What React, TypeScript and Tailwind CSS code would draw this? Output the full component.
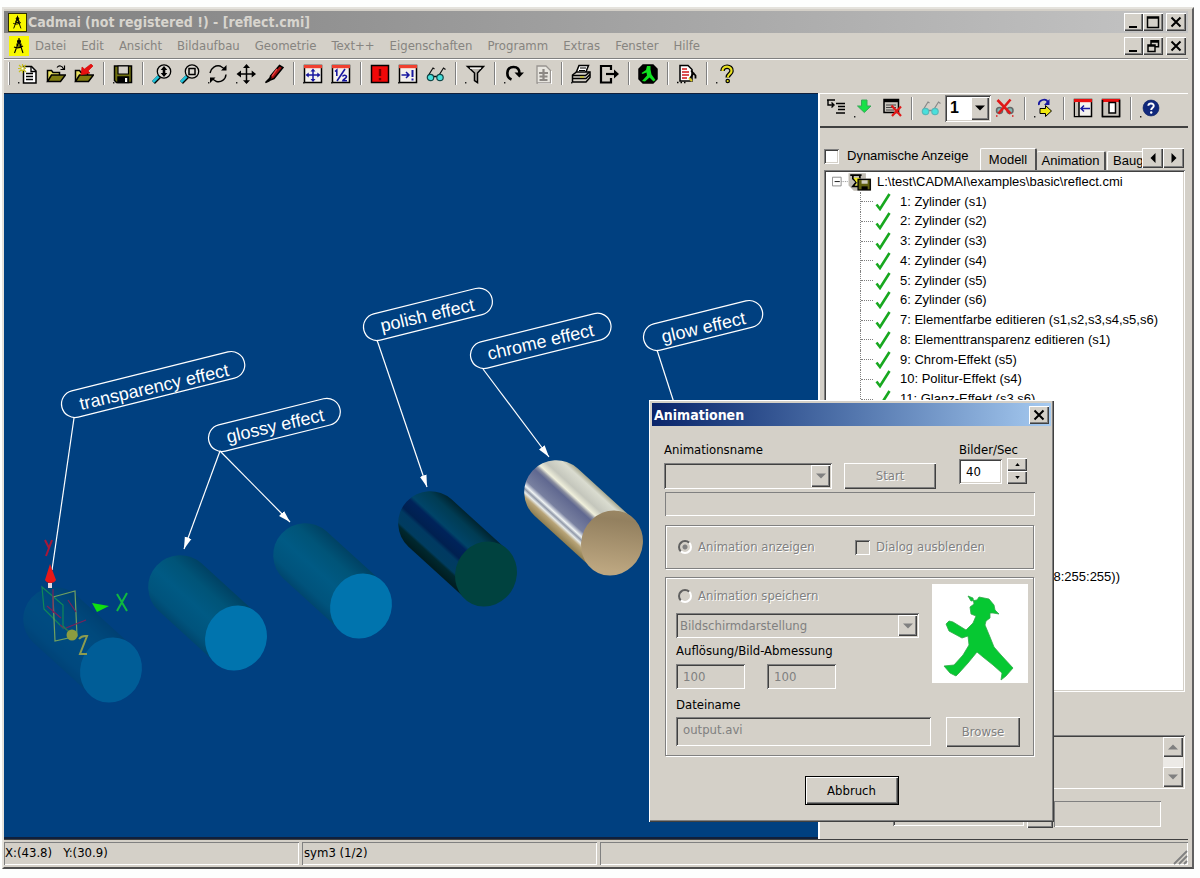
import React from "react";

const RAISED =
  "bg-[#d4d0c8] shadow-[inset_1px_1px_0_#fff,inset_-1px_-1px_0_#404040,inset_-2px_-2px_0_#808080]";
const SUNKEN =
  "shadow-[inset_1px_1px_0_#808080,inset_-1px_-1px_0_#fff,inset_2px_2px_0_#404040,inset_-2px_-2px_0_#d4d0c8]";
const THIN_SUNKEN = "shadow-[inset_1px_1px_0_#808080,inset_-1px_-1px_0_#fff]";
const ETCHED = "border border-[#808080] shadow-[1px_1px_0_#fff,inset_1px_1px_0_#fff]";
const DISABLED = "text-[#808080] [text-shadow:1px_1px_0_#fff]";

/* ---------- icons ---------- */

function Icon({ children }: { children: React.ReactNode }) {
  return (
    <svg viewBox="0 0 20 20" className="size-5" fill="none" stroke="#000" strokeWidth="1.5" aria-hidden="true">
      {children}
    </svg>
  );
}

const Dot = () => <path d="M0 18h1.4v1.4H0z" fill="#222" stroke="none" />;

const NewIcon = () => (
  <Icon>
    <path d="M5.5 2.5h8l4.5 4.5v12H5.5z" fill="#fff" />
    <path d="M13 2.5v5h5M8 9.5h7M8 12.5h7M8 15.5h7" strokeWidth="1.3" />
    <path d="M1 1l7 7M8 1L1 8M4.5 0v9M0 4.5h8" stroke="#c8c020" strokeWidth="1.2" />
    <path d="M3.5 3.5h2v2h-2z" fill="#fff" stroke="none" />
    <Dot />
  </Icon>
);

const Folder = () => (
  <>
    <path d="M1.500 17V6.500h4l1.500 2h6.500V11" fill="#e8e060" />
    <path d="M1.500 17.500L5.500 11h14l-5 6.500z" fill="#807c10" />
  </>
);

const OpenIcon = () => (
  <Icon>
    <Folder />
    <path d="M11 3.500c2-2.500 5-2 6.500 1.500M18.500 1.500v4h-4" strokeWidth="1.200" />
  </Icon>
);

const OpenRedIcon = () => (
  <Icon>
    <Folder />
    <path d="M17 0l2 2-5 5 2 2-9 2 1-8 2.500 2z" fill="#e81010" stroke="#c00" strokeWidth=".6" />
  </Icon>
);

const SaveIcon = () => (
  <Icon>
    <path d="M1.500 2h17v16.500h-15l-2-2z" fill="#707010" />
    <path d="M5 2h10.500v8H5z" fill="#d4d0c8" strokeWidth="1.200" />
    <path d="M5 13h10.500v5.500H5z" fill="#000" />
    <path d="M12 14h2.200v4H12z" fill="#fff" stroke="none" />
    <Dot />
  </Icon>
);

const Lens = () => (
  <>
    <path d="M1.500 18.500l6-6" stroke="#000" strokeWidth="4" />
    <path d="M1 18l6-6" stroke="#20c0d8" strokeWidth="2.800" />
    <circle cx="12" cy="7.500" r="6.700" fill="#dcd9d2" strokeWidth="1.300" />
  </>
);

const ZoomIcon = () => (
  <Icon>
    <Lens />
    <path d="M12 2l3.300 4h-2v3h2L12 13 8.700 9h2V6h-2z" fill="#000" stroke="none" />
  </Icon>
);

const ZoomBoxIcon = () => (
  <Icon>
    <Lens />
    <path d="M9 4.500h6v6H9z" />
  </Icon>
);

const RotateIcon = () => (
  <Icon>
    <path d="M2 9C3 3.500 8 1 12 2l4 2.500M18 10.500c-.5 5.500-5 8-9.500 7l-4-2.500" strokeWidth="1.400" />
    <path d="M18.500 1v5.500H13zM2 19v-5.500h5.500z" fill="#000" stroke="none" />
    <Dot />
  </Icon>
);

const MoveIcon = () => (
  <Icon>
    <path d="M10.500 2v17M2 10h17" />
    <path d="M10.500 0l3.500 4H7zM10.500 20l3.500-3.800H7zM.5 10L5 6.500v7zM20 10l-4.300-3.500v7z" fill="#000" stroke="none" />
    <Dot />
  </Icon>
);

const PenIcon = () => (
  <Icon>
    <path d="M15.500 1.500l3.500 2-9 11-4 1.500.5-4z" fill="#a01010" />
    <path d="M13 5l-5 7" stroke="#f04040" strokeWidth="1.300" />
    <path d="M7 13l-5.500 5.500L5 17z" fill="#000" />
  </Icon>
);

const FrameBase = ({ red = false }: { red?: boolean }) => (
  <>
    <path d="M1.500 1.500h17v17h-17z" fill="#f4f2ee" />
    <path d="M1 1h18v3.200H1z" fill={red ? "#e81010" : "#f04030"} stroke="none" />
  </>
);

const FitIcon = () => (
  <Icon>
    <FrameBase />
    <path d="M10 6v11M4 11h12" stroke="#1818a0" />
    <path d="M10 4.500l2.500 3h-5zM10 18l2.500-3h-5zM2.500 11l3.200-2.600v5.200zM17.500 11l-3.200-2.600v5.200z" fill="#1818a0" stroke="none" />
    <Dot />
  </Icon>
);

const HalfIcon = () => (
  <Icon>
    <FrameBase />
    <path d="M4 7.500l1.800-1.500v6M14 5L6 17M11.500 12.500c1-2 4-1.500 4 .3 0 1.500-3.500 2.700-3.700 4H16" stroke="#1818a0" strokeWidth="1.600" />
    <Dot />
  </Icon>
);

const AlertIcon = () => (
  <Icon>
    <path d="M1.500 1.500h17v17h-17z" fill="#f00808" />
    <path d="M10 5v7M10 14v2.200" stroke="#700" strokeWidth="2.400" />
  </Icon>
);

const StepIcon = () => (
  <Icon>
    <FrameBase />
    <path d="M3.500 11h7M8 8l3 3-3 3" stroke="#1818a0" />
    <path d="M14.500 6v7M14.500 14.500v2" stroke="#1818a0" strokeWidth="2" />
    <Dot />
  </Icon>
);

const GlassesIcon = ({ soft = false }: { soft?: boolean }) => (
  <Icon>
    <path d="M2 12l5-8 1.500 1M12.500 12l5-8 2 1.500" stroke={soft ? "#888" : "#111"} strokeWidth="1.200" />
    <path d="M7.500 12.500h4" stroke={soft ? "#888" : "#111"} />
    <circle cx="4.500" cy="13.500" r="3.200" fill="#48e0dc" stroke={soft ? "#58b8b8" : "#104848"} strokeWidth="1.200" />
    <circle cx="14" cy="13.500" r="3.200" fill="#48e0dc" stroke={soft ? "#58b8b8" : "#104848"} strokeWidth="1.200" />
  </Icon>
);

const FilterIcon = () => (
  <Icon>
    <path d="M2.500 2.500h16L12.500 9v9.500l-3-2V9z" fill="#b8b4ac" />
    <path d="M5 4.300h11" stroke="#fff" strokeWidth="1" />
    <Dot />
  </Icon>
);

const RedoIcon = () => (
  <Icon>
    <path d="M7.500 15.500C1.500 13 2 3 9.500 3c4.500 0 6 3 6 6.500" strokeWidth="2.600" />
    <path d="M10.500 8.500h9.500l-4.700 5z" fill="#000" stroke="none" />
    <Dot />
  </Icon>
);

const DocDisabledIcon = () => (
  <Icon>
    <path d="M5 2h9l4.500 4.500V19H5z" fill="#e8e6e0" stroke="#989490" strokeWidth="1.300" />
    <path d="M11.500 5v12M7 9h9M7.500 12.500h8M7.500 16h8" stroke="#8c8884" strokeWidth="2.200" />
    <path d="M19.500 7v13H6" stroke="#fff" strokeWidth="1" />
  </Icon>
);

const PrintIcon = () => (
  <Icon>
    <path d="M5 9l3-7.500h9.500L14.500 9z" fill="#fff" />
    <path d="M9 4h6M8 6.500h6" strokeWidth="1" />
    <path d="M1.500 11l4-3h13.500v5.500l-4 4.500H1.500z" fill="#d4d0c8" />
    <path d="M1.500 11.500h13l4-3.500M2 14.500h13l4-4" />
    <path d="M9 13h4" stroke="#c8c020" strokeWidth="1.400" />
    <Dot />
  </Icon>
);

const ExitIcon = () => (
  <Icon>
    <path d="M12 6V2H2v16.500h10V14" strokeWidth="2.200" />
    <path d="M7 10h9" strokeWidth="2.200" />
    <path d="M15 5.500L20 10l-5 4.500z" fill="#000" stroke="none" />
  </Icon>
);

const WalkerIcon = () => (
  <Icon>
    <path d="M5 1h10l4 4v10l-4 4H5l-4-4V5z" fill="#000" />
    <path d="M9 2h3.500v3.500l1 5 4 5.500-2 1.500-4-4-4.500 4-3-.5 5-5.500-.5-3-4 1.500L3.500 9 8 6z" fill="#10e020" stroke="none" />
  </Icon>
);

const NotesIcon = () => (
  <Icon>
    <path d="M3 1.500h8l4 4V17H3z" fill="#fff" />
    <path d="M5 5h5M5 8h7M5 11h7M5 14h5" stroke="#d01818" strokeWidth="1.500" />
    <path d="M14 6.500l4.500 5v3M13 14.500l4-6" strokeWidth="1.800" />
    <path d="M12 14l3 3" stroke="#d8c820" strokeWidth="2" />
    <path d="M0 18.500h10" strokeDasharray="1.500 2" />
  </Icon>
);

const HelpIcon = () => (
  <Icon>
    <path d="M6.500 7c0-6 9.500-5.500 9 0 0 3-3.800 3-3.800 6.500" strokeWidth="4.600" />
    <path d="M6.500 7c0-6 9.500-5.500 9 0 0 3-3.800 3-3.800 6.500" stroke="#e8e020" strokeWidth="2.200" />
    <circle cx="11.700" cy="17" r="1.700" fill="#e8e020" strokeWidth="1.200" />
    <Dot />
  </Icon>
);

const InsertIcon = () => (
  <Icon>
    <path d="M1 2h8M2 2v5h5M5.500 4.500L8 7 5.500 9.500M10 5.500h9M12 8.500h7M12 11.500h7M10 15h9" strokeWidth="1.400" />
  </Icon>
);

const DownIcon = () => (
  <Icon>
    <path d="M7.500 2h5.500v6h4l-6.700 6.500L3.500 8h4z" fill="#18e048" stroke="#38a858" strokeWidth="1" />
    <Dot />
  </Icon>
);

const ListDeleteIcon = () => (
  <Icon>
    <path d="M2 1.500h14.500v13H2z" fill="#c8c4bc" />
    <path d="M2 3h14.500" strokeWidth="2.400" />
    <path d="M4 7h10M4 9.500h10M4 12h8" stroke="#444" strokeWidth="1" />
    <path d="M9.500 7.500l9.500 10.500M19 8.500l-9 9.500" stroke="#e01818" strokeWidth="2.200" />
  </Icon>
);

const GlassesOffIcon = () => (
  <Icon>
    <circle cx="4.500" cy="12.500" r="3" fill="#80b8b4" stroke="#666" />
    <circle cx="15" cy="12.500" r="3" fill="#80b8b4" stroke="#666" />
    <path d="M2.500 2l13 13.500M15.500 1.500L3.500 15.500" stroke="#e01818" strokeWidth="2.600" />
    <path d="M1 18h1.500M17 18h1.500" stroke="#e01818" />
  </Icon>
);

const RefreshIcon = () => (
  <Icon>
    <path d="M5 7c-1-5 7-7.500 9-2.500" stroke="#1818a0" strokeWidth="1.800" />
    <path d="M15.500 1v6H10z" fill="#1818a0" stroke="none" />
    <path d="M6 10.500h5.500V7.500l6 5.500-6 5.500V15.500H6z" fill="#f0e810" strokeWidth="1" />
    <Dot />
  </Icon>
);

const DockIcon = () => (
  <Icon>
    <FrameBase red />
    <path d="M2 4.500h4V18H2z" fill="#c8c4bc" stroke="none" />
    <path d="M6 4v14" />
    <path d="M8 10.500h9M11 7.500l-3 3 3 3" stroke="#1818a0" />
  </Icon>
);

const WindowIcon = () => (
  <Icon>
    <FrameBase red />
    <path d="M2 4.500h16V18H2z" fill="#c8c4bc" stroke="none" />
    <path d="M8 4.500h6.500V15H8z" fill="#fff" />
    <path d="M1.500 2v16.500h17V2" />
  </Icon>
);

const InfoIcon = () => (
  <Icon>
    <circle cx="11" cy="10" r="8" fill="#10287c" stroke="#0c2060" strokeWidth=".6" />
    <path d="M8.300 7.800c.2-3.500 5.700-3 5.400.2-.1 1.700-2.500 1.800-2.500 4" stroke="#fff" strokeWidth="2" />
    <circle cx="11.200" cy="14.500" r="1.200" fill="#fff" stroke="none" />
    <Dot />
  </Icon>
);

const CheckMark = () => (
  <svg viewBox="0 0 16 18" className="h-[18px] w-4" fill="none" stroke="#18a820" strokeWidth="2.600" aria-hidden="true">
    <path d="M1.500 11.500L5 16 14.500 1" />
  </svg>
);

const AppLogo = () => (
  <svg viewBox="0 0 20 20" className="size-5" fill="none" stroke="#000" strokeWidth="1.100" aria-hidden="true">
    <path d="M0 0h20v20H0z" fill="#f8f800" stroke="none" />
    <path d="M10 2v3M10 5L5.500 17M10 5l4 12M5 11c3 1.500 6 1 9-1M8 8h4v2H8z" />
    <circle cx="10" cy="5.500" r="1.500" fill="#000" />
  </svg>
);

const Arrow = ({ dir, dim = false }: { dir: "up" | "down" | "left" | "right"; dim?: boolean }) => {
  const d = { up: "M0 6l4-4 4 4z", down: "M0 2l4 4 4-4z", left: "M6 0v8L2 4z", right: "M2 0v8l4-4z" }[dir];
  return (
    <svg viewBox="0 0 8 8" className="size-[10px]" aria-hidden="true">
      <path d={d} fill={dim ? "#808080" : "#000"} />
    </svg>
  );
};

const Glyph = ({ kind }: { kind: "min" | "max" | "restore" | "close" }) => (
  <svg viewBox="0 0 14 14" className="size-[14px]" fill="none" stroke="#000" strokeWidth="1.500" aria-hidden="true">
    {kind === "min" && <path d="M2 12h8" strokeWidth="2" />}
    {kind === "max" && <path d="M1.500 2h11v10.500h-11zM1.500 3h11" />}
    {kind === "restore" && <path d="M5 6V1.800h7.500v6H9M5 3h7M2 6h7v6.500H2zM2 7h7" />}
    {kind === "close" && <path d="M2.500 2.500l9 9M11.500 2.500l-9 9" strokeWidth="2" />}
  </svg>
);

/* ---------- small controls ---------- */

const ToolButton = ({ label, children }: { label: string; children: React.ReactNode }) => (
  <button type="button" aria-label={label} className="grid h-6 w-7 shrink-0 place-items-center">
    {children}
  </button>
);

const Divider = () => (
  <span className="flex w-[11px] shrink-0 justify-center">
    <span className="h-[23px] w-[2px] border-l border-[#808080] bg-white" />
  </span>
);

const WindowButtons = ({ middle }: { middle: "max" | "restore" }) => (
  <div className="flex">
    <button type="button" aria-label="Minimieren" className={`grid h-[18px] w-[19px] place-items-center ${RAISED}`}>
      <Glyph kind="min" />
    </button>
    <button type="button" aria-label="Maximieren" className={`mr-[3px] grid h-[18px] w-5 place-items-center ${RAISED}`}>
      <Glyph kind={middle} />
    </button>
    <button type="button" aria-label="Schließen" className={`grid h-[18px] w-5 place-items-center ${RAISED}`}>
      <Glyph kind="close" />
    </button>
  </div>
);

/* ---------- 3D view ---------- */

type Stop = [number, string];

function Cylinder({ id, x, y, face, stops, opacity = 1 }: { id: string; x: number; y: number; face: string; stops: Stop[]; opacity?: number }) {
  return (
    <g transform={`translate(${x} ${y})`} opacity={opacity}>
      <linearGradient id={id} gradientUnits="userSpaceOnUse" x1="-21.5" y1="23.7" x2="21.5" y2="-23.7">
        {stops.map(([at, color]) => (
          <stop key={at} offset={at} stopColor={color} />
        ))}
      </linearGradient>
      <path d="M-77.500 -27.300A32 32 0 0 1 -34.500 -74.700L21.500 -23.700L-21.500 23.700Z" fill={`url(#${id})`} />
      <ellipse rx="30.500" ry="33" transform="rotate(25)" fill={face} />
    </g>
  );
}

const BLUE: Stop[] = [
  [0, "#00466e"],
  [0.15, "#00537c"],
  [0.45, "#005a84"],
  [0.75, "#005478"],
  [1, "#004264"],
];
const POLISH: Stop[] = [
  [0, "#001c20"],
  [0.14, "#00282f"],
  [0.18, "#003c60"],
  [0.34, "#003a62"],
  [0.4, "#002050"],
  [0.56, "#00235a"],
  [0.62, "#004468"],
  [0.85, "#003c54"],
  [1, "#002430"],
];
const CHROME: Stop[] = [
  [0, "#8c7c50"],
  [0.12, "#b8a478"],
  [0.17, "#e8ecec"],
  [0.21, "#9098a8"],
  [0.25, "#f0f4f4"],
  [0.32, "#7880a0"],
  [0.54, "#606890"],
  [0.59, "#8c90a0"],
  [0.64, "#f0f0dc"],
  [0.74, "#c4c6bc"],
  [0.92, "#dadcd0"],
  [1, "#a8a890"],
];

const LABELS = [
  { text: "transparency effect", x: 75, y: 404, length: 161, tx: 81, ty: 410 },
  { text: "glossy effect", x: 222, y: 438, length: 108, tx: 228, ty: 443 },
  { text: "polish effect", x: 377, y: 327, length: 105, tx: 382, ty: 332 },
  { text: "chrome effect", x: 484, y: 355, length: 117, tx: 489, ty: 360 },
  { text: "glow effect", x: 657, y: 337, length: 95, tx: 663, ty: 343 },
];

const LEADERS = [
  [220, 451, 184, 549],
  [220, 451, 290, 522],
  [377, 340, 427, 487],
  [483, 369, 549, 457],
  [657, 350, 686, 440],
];

function Scene() {
  return (
    <svg
      viewBox="4 94 814 745"
      preserveAspectRatio="xMinYMin slice"
      className="absolute inset-0 h-full w-full"
      role="img"
      aria-label="3D-Ansicht"
    >
      <defs>
        <marker id="tip" viewBox="0 0 12 8" refX="12" refY="4" markerWidth="12" markerHeight="8" markerUnits="userSpaceOnUse" orient="auto">
          <path d="M0 0.500L12 4L0 7.500z" fill="#fff" />
        </marker>
        <linearGradient id="chromeFace" x1="0" y1="0" x2="0.300" y2="1">
          <stop offset="0" stopColor="#a08c68" />
          <stop offset="0.250" stopColor="#93805f" />
          <stop offset="1" stopColor="#bca680" />
        </linearGradient>
      </defs>

      <Cylinder id="c1" x={111} y={670} face="#0080b4" stops={BLUE} opacity={0.46} />
      <Cylinder id="c2" x={236} y={638} face="#0074ae" stops={BLUE} />
      <Cylinder id="c3" x={361} y={606} face="#0074ae" stops={BLUE} />
      <Cylinder id="c4" x={486} y={574} face="#00423f" stops={POLISH} />
      <Cylinder id="c5" x={612} y={543} face="url(#chromeFace)" stops={CHROME} />

      <g stroke="#fff" strokeWidth="1.200" fill="none">
        <line x1="74" y1="418" x2="52" y2="570" />
        {LEADERS.map(([x1, y1, x2, y2], i) => (
          <line key={i} x1={x1} y1={y1} x2={x2} y2={y2} markerEnd="url(#tip)" />
        ))}
        {LABELS.map((l) => (
          <rect key={l.text} x={-13.5} y={-13.5} width={l.length + 27} height={27} rx={13.5} transform={`translate(${l.x} ${l.y}) rotate(-14)`} />
        ))}
      </g>

      <g fill="none" strokeWidth="1.200">
        <path d="M42 587l21 18v23l-19-19z" stroke="#108858" />
        <path d="M53 597l22-6 2 45-22 5z" stroke="#70a060" />
        <path d="M53 589v24M47 606l14 12M68 600l8 12M66 628l20-8M60 625l14 10" stroke="#7c2058" />
        <path d="M63 626l10 10" stroke="#108858" />
        <path d="M45 540l4 8M52 540l-6 16" stroke="#a81838" strokeWidth="2" />
        <path d="M117 594l10 17M127 593l-10 18" stroke="#10b840" strokeWidth="2" />
        <path d="M79 639c3-4 6-3 8-3l-7 18h7" stroke="#8c9c50" strokeWidth="2" />
      </g>
      <path d="M50 564l6 16c-2 4-9 4-11 0z" fill="#e81818" />
      <path d="M48 583h4v5h-4z" fill="#e8d8e0" />
      <path d="M92 603l17 3-12 6z" fill="#10e010" />
      <circle cx="72" cy="635" r="5.500" fill="#8c9c40" />

      <g fill="#fff" className="font-['Liberation_Sans',sans-serif] text-[18px]">
        {LABELS.map((l) => (
          <text key={l.text} transform={`translate(${l.tx} ${l.ty}) rotate(-13)`}>
            {l.text}
          </text>
        ))}
      </g>
    </svg>
  );
}

/* ---------- model panel ---------- */

const STEPS = [
  "1: Zylinder (s1)",
  "2: Zylinder (s2)",
  "3: Zylinder (s3)",
  "4: Zylinder (s4)",
  "5: Zylinder (s5)",
  "6: Zylinder (s6)",
  "7: Elementfarbe editieren (s1,s2,s3,s4,s5,s6)",
  "8: Elementtransparenz editieren (s1)",
  "9: Chrom-Effekt (s5)",
  "10: Politur-Effekt (s4)",
  "11: Glanz-Effekt (s3,s6)",
];

function ModelPanel() {
  return (
    <aside className="flex w-[370px] shrink-0 flex-col border-l-2 border-t border-white bg-[#d4d0c8] font-['Liberation_Sans',sans-serif] text-[13px] leading-4">
      <div className="flex h-[34px] items-center border-b-2 border-[#404040] pb-1 pl-[2px]">
        <ToolButton label="Einfügen"><InsertIcon /></ToolButton>
        <ToolButton label="Nach unten"><DownIcon /></ToolButton>
        <ToolButton label="Schritt löschen"><ListDeleteIcon /></ToolButton>
        <Divider />
        <ToolButton label="Anzeigen"><GlassesIcon soft /></ToolButton>
        <span className="relative flex">
          <select
            aria-label="Ansicht"
            className={`h-[27px] w-[46px] appearance-none bg-white pl-[5px] text-[16px] font-bold ${SUNKEN}`}
          >
            <option>1</option>
          </select>
          <span className={`pointer-events-none absolute bottom-[2px] right-[2px] top-[2px] grid w-[18px] place-items-center ${RAISED}`}>
            <Arrow dir="down" />
          </span>
        </span>
        <ToolButton label="Ausblenden"><GlassesOffIcon /></ToolButton>
        <Divider />
        <ToolButton label="Aktualisieren"><RefreshIcon /></ToolButton>
        <Divider />
        <ToolButton label="Andocken"><DockIcon /></ToolButton>
        <ToolButton label="Fenster"><WindowIcon /></ToolButton>
        <Divider />
        <ToolButton label="Hilfe"><InfoIcon /></ToolButton>
      </div>

      <div className="mt-5 flex h-[22px] items-end px-1">
        <label className="flex flex-1 items-center gap-2 self-start">
          <input type="checkbox" className={`size-[15px] appearance-none bg-white checked:bg-[#404040] ${SUNKEN}`} />
          Dynamische Anzeige
        </label>
        <div role="tablist" className="flex items-end">
          <button role="tab" aria-selected="true" className="h-[22px] w-[57px] rounded-t-[2px] border-l border-r-2 border-t border-l-white border-r-[#505050] border-t-white">
            Modell
          </button>
          <button role="tab" aria-selected="false" className="h-[19px] w-[69px] rounded-t-[2px] border-r-2 border-t border-r-[#505050] border-t-white">
            Animation
          </button>
          <button role="tab" aria-selected="false" className="ml-px h-[19px] w-[35px] overflow-hidden rounded-tl-[2px] border-l border-t border-white pl-[5px] text-left">
            Baug
          </button>
        </div>
        <button type="button" aria-label="Zurück" className={`mb-[2px] grid h-5 w-[21px] place-items-center ${RAISED}`}>
          <Arrow dir="left" />
        </button>
        <button type="button" aria-label="Weiter" className={`mb-[2px] grid h-5 w-[21px] place-items-center ${RAISED}`}>
          <Arrow dir="right" />
        </button>
      </div>

      <div className={`ml-1 mr-[3px] flex-1 bg-white p-[2px] ${SUNKEN}`}>
        <ul className="grid h-[415px] auto-rows-fr whitespace-nowrap">
          <li className="flex items-center">
            <svg viewBox="0 0 46 20" className="ml-[6px] mr-[5px] h-5 w-[40px]" fill="none" stroke="#808080" aria-hidden="true">
              <path d="M.5 4.500h10v10H.5z" />
              <path d="M3 9.500h6" stroke="#000" />
              <path d="M11 9.500h8" strokeDasharray="1 1" />
              <path d="M19 0h20v6h6v14H25l-6-6z" fill="#c0bcb4" stroke="none" />
              <path d="M21 2h13M24 2v4l4 4-4 5h8M32 2v4" stroke="#000" strokeWidth="2" />
              <path d="M24.500 5h7v4l-3 2zM26 14l4-3 3 3z" fill="#f0e820" stroke="none" />
              <path d="M30 7h14v12H30z" fill="#606010" stroke="#000" strokeWidth="1.500" />
              <path d="M34 8h7v4h-7z" fill="#d0ccc0" stroke="none" />
              <path d="M34 15h7v4h-7z" fill="#000" stroke="none" />
            </svg>
            L:\test\CADMAI\examples\basic\reflect.cmi
          </li>
          {STEPS.map((step) => (
            <li key={step} className="ml-[34px] flex items-center border-l border-dotted border-[#808080]">
              <span className="mr-[2px] w-3 border-t border-dotted border-[#808080]" />
              <CheckMark />
              <span className="pl-[9px]">{step}</span>
            </li>
          ))}
          <li className="row-start-21 flex items-center justify-end pr-[63px]">8:255:255))</li>
        </ul>
      </div>

      <div className={`ml-1 mr-[3px] mt-[43px] flex h-[54px] shrink-0 justify-end p-[2px] ${SUNKEN}`}>
        <div className="flex w-5 flex-col justify-between bg-[#eceae6]">
          <button type="button" aria-label="Nach oben blättern" className={`grid h-5 place-items-center ${RAISED}`}>
            <Arrow dir="up" dim />
          </button>
          <button type="button" aria-label="Nach unten blättern" className={`grid h-5 place-items-center ${RAISED}`}>
            <Arrow dir="down" dim />
          </button>
        </div>
      </div>
      <div className="mb-[11px] mr-[27px] mt-3 flex h-[27px] shrink-0 justify-end">
        <span className={`mb-[2px] w-[131px] ${SUNKEN}`} />
        <span className={`ml-[3px] w-[26px] ${RAISED}`} />
        <span className={`mb-px ml-px w-[107px] ${THIN_SUNKEN}`} />
      </div>
    </aside>
  );
}

/* ---------- dialog ---------- */

const Walker = () => (
  <svg viewBox="0 0 96 99" className="h-[99px] w-24 shrink-0 bg-white" role="img" aria-label="Ampelmännchen">
    <g fill="#06c832" stroke="#30a848" strokeWidth=".8" strokeLinejoin="round">
      <path d="M39 17l6-1 2-3 10 2 5 6 1 5 4 4-6-1-3 0 0 5-4 3-1 4 5 12 4 10 7 8 12 13-7 8-5 4 1-7-9-8-10-8-6-5-9 11-9 10-3 3-6-3-6-7 10-1 9-10 6-10-1-9-6 2-13-7-3-7 3-3 4 1 13 8 7-7 3-7-5-2-1-7 4-3-1-6-5-2z" />
    </g>
  </svg>
);

function AnimationDialog() {
  return (
    <div
      role="dialog"
      aria-label="Animationen"
      className={`absolute right-[146px] top-[400px] w-[405px] p-[3px] text-[13px] leading-4 ${RAISED}`}
    >
      <div className="flex h-[23px] items-center bg-linear-to-r from-[#0a246a] to-[#a6caf0] pl-[2px] pr-[2px] pt-px">
        <h2 className="flex-1 text-[14px] font-bold text-white">Animationen</h2>
        <button type="button" aria-label="Schließen" className={`grid h-[18px] w-5 place-items-center ${RAISED}`}>
          <Glyph kind="close" />
        </button>
      </div>

      <form className="px-3 pb-[14px] pt-4" onSubmit={(e) => e.preventDefault()}>
        <div className="flex items-end gap-3 pb-[3px]">
          <div className="flex w-[168px] flex-col gap-[5px]">
            <label htmlFor="anim-name">Animationsname</label>
            <span className="relative flex">
              <select id="anim-name" disabled className={`h-[26px] w-full appearance-none bg-[#d4d0c8] ${SUNKEN}`} />
              <span className={`pointer-events-none absolute bottom-[2px] right-[2px] top-[2px] grid w-[19px] place-items-center ${RAISED}`}>
                <Arrow dir="down" dim />
              </span>
            </span>
          </div>
          <button type="button" disabled className={`h-[26px] w-[92px] ${RAISED} ${DISABLED}`}>
            Start
          </button>
          <div className="ml-auto mr-3 flex flex-col self-start">
            <label htmlFor="fps">Bilder/Sec</label>
            <span className="flex items-center gap-[5px]">
              <input id="fps" defaultValue="40" className={`h-[25px] w-[43px] bg-white px-[7px] ${SUNKEN}`} />
              <span className="flex w-5 flex-col">
                <button type="button" aria-label="Mehr" className={`grid h-[13px] place-items-center ${RAISED}`}>
                  <svg viewBox="0 0 6 4" className="h-[3px] w-[5px]" aria-hidden="true"><path d="M0 4l3-4 3 4z" /></svg>
                </button>
                <button type="button" aria-label="Weniger" className={`grid h-[13px] place-items-center ${RAISED}`}>
                  <svg viewBox="0 0 6 4" className="h-[3px] w-[5px]" aria-hidden="true"><path d="M0 0l3 4 3-4z" /></svg>
                </button>
              </span>
            </span>
          </div>
        </div>

        <div role="progressbar" aria-label="Fortschritt" aria-valuenow={0} className={`ml-px mr-1 h-6 ${THIN_SUNKEN}`} />

        <div className={`ml-px mr-[5px] mt-[9px] flex h-11 items-center pl-3 ${ETCHED} ${DISABLED}`}>
          <label className="flex w-[177px] items-center gap-[6px]">
            <input
              type="radio"
              name="mode"
              disabled
              defaultChecked
              className="size-[14px] appearance-none rounded-full border-2 border-b-white border-l-[#606060] border-r-white border-t-[#606060] checked:bg-[radial-gradient(circle,#808080_2px,transparent_3px)]"
            />
            Animation anzeigen
          </label>
          <label className="flex items-center gap-[6px]">
            <input type="checkbox" disabled className={`size-[15px] appearance-none ${SUNKEN}`} />
            Dialog ausblenden
          </label>
        </div>

        <div className={`ml-px mr-[5px] mt-2 flex h-[179px] flex-col pl-[10px] pr-[5px] pt-[6px] ${ETCHED}`}>
          <div className="flex justify-between">
            <div className="flex w-[243px] flex-col">
              <label className={`flex h-6 items-center gap-[6px] pl-[2px] ${DISABLED}`}>
                <input
                  type="radio"
                  name="mode"
                  disabled
                  className="size-[14px] appearance-none rounded-full border-2 border-b-white border-l-[#606060] border-r-white border-t-[#606060]"
                />
                Animation speichern
              </label>
              <span className="relative mt-[5px] flex">
                <select
                  disabled
                  aria-label="Darstellung"
                  className={`h-[25px] w-full appearance-none bg-[#d4d0c8] pl-1 text-[#808080] opacity-100 ${SUNKEN}`}
                >
                  <option>Bildschirmdarstellung</option>
                </select>
                <span className={`pointer-events-none absolute bottom-[2px] right-[2px] top-[2px] grid w-[19px] place-items-center ${RAISED}`}>
                  <Arrow dir="down" dim />
                </span>
              </span>
              <label htmlFor="res-x" className="mt-[5px]">Auflösung/Bild-Abmessung</label>
              <span className="mt-[5px] flex gap-[22px]">
                <input id="res-x" disabled defaultValue="100" className={`h-[25px] w-[69px] px-[7px] text-[#808080] ${SUNKEN}`} />
                <input aria-label="Bildhöhe" disabled defaultValue="100" className={`h-[25px] w-[69px] px-[7px] text-[#808080] ${SUNKEN}`} />
              </span>
            </div>
            <Walker />
          </div>
          <label htmlFor="file" className="mt-2">Dateiname</label>
          <div className="mt-1 flex justify-between pr-2">
            <input id="file" disabled defaultValue="output.avi" className={`h-[29px] w-[255px] px-[7px] pb-1 text-[#808080] ${SUNKEN}`} />
            <button type="button" disabled className={`h-[30px] w-[74px] ${RAISED} ${DISABLED}`}>
              Browse
            </button>
          </div>
        </div>

        <div className="mt-5 flex justify-center">
          <button type="button" className={`h-[29px] w-[94px] border border-black ${RAISED}`}>
            Abbruch
          </button>
        </div>
      </form>
    </div>
  );
}

/* ---------- application ---------- */

const MENU = ["Datei", "Edit", "Ansicht", "Bildaufbau", "Geometrie", "Text++", "Eigenschaften", "Programm", "Extras", "Fenster", "Hilfe"];

const TOOLS: [string, React.ReactNode][][] = [
  [["Neu", <NewIcon />], ["Öffnen", <OpenIcon />], ["Einlesen", <OpenRedIcon />]],
  [["Speichern", <SaveIcon />]],
  [["Zoom", <ZoomIcon />], ["Zoom Fenster", <ZoomBoxIcon />], ["Drehen", <RotateIcon />], ["Verschieben", <MoveIcon />], ["Zeichnen", <PenIcon />]],
  [["Einpassen", <FitIcon />], ["Halbieren", <HalfIcon />]],
  [["Stopp", <AlertIcon />], ["Schritt", <StepIcon />], ["Betrachten", <GlassesIcon />]],
  [["Filter", <FilterIcon />]],
  [["Wiederholen", <RedoIcon />], ["Dokument", <DocDisabledIcon />]],
  [["Drucken", <PrintIcon />], ["Beenden", <ExitIcon />]],
  [["Animation", <WalkerIcon />]],
  [["Protokoll", <NotesIcon />]],
  [["Hilfe", <HelpIcon />]],
];

export default function App() {
  return (
    <div className="relative flex min-h-screen flex-col bg-[#fdfefd] pb-[9px] pl-[2px] pr-[6px] pt-[7px] font-['DejaVu_Sans_Condensed','DejaVu_Sans',sans-serif] text-black">
      <div className="flex flex-1 flex-col border-b-2 border-l-2 border-r-2 border-t-2 border-b-[#505050] border-l-[#e4e2dc] border-r-[#606060] border-t-[#e4e2dc] bg-[#d4d0c8] pr-1 pt-[2px]">
        <header className="flex h-[22px] items-center bg-linear-to-r from-[#808080] to-[#c4c4c4] pl-1 pr-[2px]">
          <span className="grid place-items-center border border-[#303000] [&>svg]:size-[17px]"><AppLogo /></span>
          <h1 className="flex-1 pl-px text-[14px] font-bold leading-5 text-[#d8d5ce]">Cadmai (not registered !) - [reflect.cmi]</h1>
          <WindowButtons middle="max" />
        </header>

        <nav className="flex h-[26px] items-center border-b border-[#808080] pl-[5px] pr-[2px]">
          <AppLogo />
          <div className="flex flex-1 gap-[15px] pl-[6px]">
            {MENU.map((item) => (
              <a key={item} href="#" className="text-[13px] leading-5 text-[#868480]">
                {item}
              </a>
            ))}
          </div>
          <WindowButtons middle="restore" />
        </nav>

        <div role="toolbar" className="flex h-[34px] items-center border-t border-white pb-[6px] pl-1">
          <span className="mr-1 h-[23px] w-[2px] border-l border-white bg-[#808080]" />
          {TOOLS.map((group, i) => (
            <React.Fragment key={i}>
              {i > 0 && <Divider />}
              {group.map(([label, icon]) => (
                <ToolButton key={label} label={label}>
                  {icon}
                </ToolButton>
              ))}
            </React.Fragment>
          ))}
        </div>

        <main className="flex flex-1">
          <div className="relative flex-1 overflow-hidden border-b-2 border-t border-[#10203c] bg-[#004080]">
            <Scene />
          </div>
          <ModelPanel />
        </main>

        <footer className="flex h-[28px] gap-[3px] border-t border-[#404040] pb-[2px] pt-[2px] text-[13px] leading-[22px]">
          <span className={`w-[295px] whitespace-pre pl-px ${THIN_SUNKEN}`}>{"X:(43.8)   Y:(30.9)"}</span>
          <span className={`w-[295px] pl-[2px] ${THIN_SUNKEN}`}>sym3 (1/2)</span>
          <span className={`flex flex-1 items-end justify-end ${THIN_SUNKEN}`}>
            <svg viewBox="0 0 16 16" className="size-4" stroke="#808080" strokeWidth="1.800" aria-hidden="true">
              <path d="M2 15L15 2M7 15l8-8M12 15l3-3" />
            </svg>
          </span>
        </footer>
      </div>

      <AnimationDialog />
    </div>
  );
}
